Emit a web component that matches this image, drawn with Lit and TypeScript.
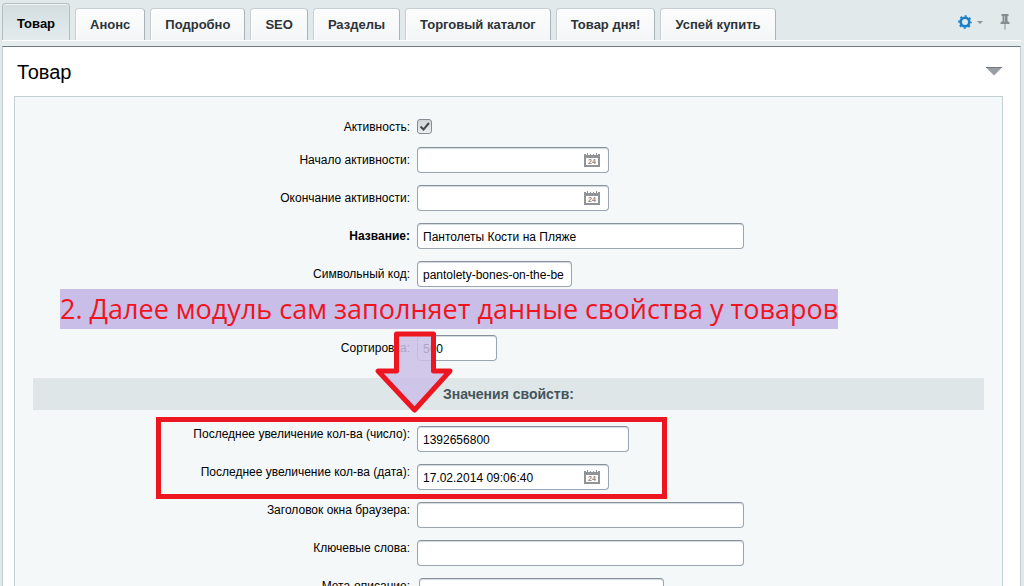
import { LitElement, html, css, svg } from "lit";
import { customElement, property, state } from "lit/decorators.js";
import { classMap } from "lit/directives/class-map.js";

interface Field {
  id: string;
  label: string;
  kind: "check" | "date" | "text" | "area";
  size?: "code" | "sort" | "number" | "full";
  value?: string;
  bold?: boolean;
}

const MAIN_FIELDS: Field[] = [
  { id: "active", label: "Активность:", kind: "check" },
  { id: "from", label: "Начало активности:", kind: "date" },
  { id: "to", label: "Окончание активности:", kind: "date" },
  { id: "name", label: "Название:", kind: "text", size: "full", value: "Пантолеты Кости на Пляже", bold: true },
  { id: "code", label: "Символьный код:", kind: "text", size: "code", value: "pantolety-bones-on-the-be" },
];

const SORT_FIELDS: Field[] = [
  { id: "sort", label: "Сортировка:", kind: "text", size: "sort", value: "500" },
];

const PROPERTY_FIELDS: Field[] = [
  { id: "inc-number", label: "Последнее увеличение кол-ва (число):", kind: "text", size: "number", value: "1392656800" },
  { id: "inc-date", label: "Последнее увеличение кол-ва (дата):", kind: "date", value: "17.02.2014 09:06:40" },
  { id: "title", label: "Заголовок окна браузера:", kind: "text", size: "full" },
  { id: "keywords", label: "Ключевые слова:", kind: "text", size: "full" },
  { id: "description", label: "Мета-описание:", kind: "area" },
];

@customElement("date-field")
class DateField extends LitElement {
  @property() label = "";
  @property() value = "";

  static styles = css`
    :host { display: block; width: 192px; }
    .box {
      display: flex;
      align-items: center;
      box-sizing: border-box;
      height: 26px;
      padding: 0 8px 0 5px;
      border: 1px solid #9aa5b0;
      border-top-color: #87919c;
      border-radius: 4px;
      background: #fff;
      box-shadow: inset 0 1px 1px #d3d9dd;
    }
    input {
      flex: 1;
      min-width: 0;
      padding: 2px 0 0;
      border: 0;
      outline: 0;
      background: none;
      color: #000;
      font: 12px "Liberation Sans", Arial, sans-serif;
    }
    button { display: flex; padding: 0; border: 0; background: none; cursor: pointer; }
    text { font: bold 7px "Liberation Sans", Arial, sans-serif; fill: #85898c; }
  `;

  render() {
    return html`<div class="box">
      <input type="text" aria-label=${this.label} .value=${this.value} />
      <button type="button" aria-label="Календарь">
        <svg width="16" height="16" viewBox="0 0 16 16">
          <path d="M0 2h2v1h1V1h1v2h2V2h1v1h2V2h1v1h2V1h1v2h1V2h2v13H0z" fill="#909496" />
          <path d="M2 6h12v7H2z" fill="#fff" />
          <text x="8" y="12" text-anchor="middle">24</text>
        </svg>
      </button>
    </div>`;
  }
}

@customElement("app-root")
class AppRoot extends LitElement {
  @state() private active = 0;

  private tabs = ["Товар", "Анонс", "Подробно", "SEO", "Разделы", "Торговый каталог", "Товар дня!", "Успей купить"];

  static styles = css`
    :host {
      display: block;
      height: 100vh;
      overflow: hidden;
      background: #e1e9eb;
      color: #000;
      font: 12px/16px "Liberation Sans", Arial, sans-serif;
    }
    .page { margin: 0 3px 0 2px; }
    .bar { display: flex; align-items: flex-end; height: 40px; }
    .tabs { display: flex; align-items: flex-end; gap: 5px; }
    .tab {
      height: 32px;
      box-sizing: border-box;
      padding: 0 14px;
      border: 1px solid #c6d0d3;
      border-right-color: #a9b4b8;
      border-bottom: 0;
      border-radius: 4px 4px 0 0;
      background: linear-gradient(#fcfdfd, #f3f6f7);
      box-shadow: inset 1px 1px #fff;
      color: #2d3339;
      font: bold 13px "Liberation Sans", Arial, sans-serif;
      white-space: nowrap;
      cursor: pointer;
    }
    .tab.on {
      height: 37px;
      padding-top: 2px;
      border-color: #b3bfc3;
      background: linear-gradient(#d3dddf, #e3ebed);
      box-shadow: inset 0 1px #eef3f4;
      color: #000;
    }
    .tools { display: flex; align-items: center; gap: 5px; height: 22px; margin: 0 11px 7px auto; }
    .tools button, .fold { display: flex; padding: 0; border: 0; background: none; cursor: pointer; }
    .tools .pin { margin-left: 12px; }
    .strip { height: 6px; box-sizing: border-box; border-top: 1px solid #fff; background: #e6edef; }
    .panel {
      position: relative;
      padding: 0 17px 0 11px;
      border: 1px solid #c3ced2;
      border-top: 1px solid #6f7a80;
      background: #fff;
    }
    .head { display: flex; align-items: center; justify-content: space-between; height: 49px; padding: 0 1px 0 3px; }
    h1 { margin: 0; font-size: 20px; line-height: 24px; font-weight: 400; }
    .form {
      padding: 20px 18px;
      border: 1px solid #c3d0d4;
      background: #f4f8f9;
    }
    .rows { display: flex; flex-direction: column; gap: 12px; }
    .row { display: grid; grid-template-columns: 377px 1fr; column-gap: 7px; align-items: center; min-height: 26px; }
    .row.short { min-height: 18px; }
    .row.short .label { padding-top: 2px; }
    .props .row { align-items: start; }
    .label { text-align: right; }
    .label.bold { font-weight: 700; }
    .sorting { margin-top: 48px; }
    h2 {
      margin: 17px 0 16px;
      background: #dfe6e7;
      color: #43555c;
      font-size: 14px;
      line-height: 32px;
      text-align: center;
    }
    .text, .area {
      box-sizing: border-box;
      height: 26px;
      max-width: 100%;
      padding: 2px 5px 0;
      border: 1px solid #9aa5b0;
      border-top-color: #87919c;
      border-radius: 4px;
      outline: 0;
      background: #fff;
      box-shadow: inset 0 1px 1px #d3d9dd;
      color: #000;
      font: 12px "Liberation Sans", Arial, sans-serif;
    }
    .full { width: 327px; }
    .code { width: 155px; }
    .sort { width: 80px; }
    .number { width: 212px; }
    .area { display: block; width: 245px; height: 60px; margin-left: 2px; resize: none; }
    .check {
      appearance: none;
      display: block;
      width: 15px;
      height: 15px;
      margin: 0;
      border: 1px solid #868c92;
      border-radius: 3px;
      background: linear-gradient(#d0d4d6, #eceeef);
    }
    .checkwrap { display: grid; width: 15px; }
    .checkwrap > * { grid-area: 1 / 1; }
    .checkwrap svg { pointer-events: none; }
    .check:not(:checked) + svg { visibility: hidden; }
    .note {
      position: absolute;
      top: 242px;
      left: 57px;
      background: #c9bee8;
      color: #f0141e;
      font: 27px/40px "Open Sans", "Noto Sans", sans-serif;
      white-space: nowrap;
    }
    .arrow { position: absolute; top: 282px; left: 370px; }
    .frame {
      position: absolute;
      top: 370px;
      left: 153px;
      width: 501px;
      height: 72px;
      border: 5px solid #ed1620;
      pointer-events: none;
    }
  `;

  private control(f: Field) {
    if (f.kind === "check") {
      return html`<span class="checkwrap">
        <input class="check" id=${f.id} type="checkbox" checked />
        <svg width="15" height="15" viewBox="0 0 15 15">
          <path d="M3.5 7.5l3 3L12 4" fill="none" stroke="#43494e" stroke-width="2" />
        </svg>
      </span>`;
    }
    if (f.kind === "date") {
      return html`<date-field id=${f.id} .label=${f.label} .value=${f.value ?? ""}></date-field>`;
    }
    if (f.kind === "area") return html`<textarea class="area" id=${f.id}></textarea>`;
    return html`<input class="text ${f.size}" id=${f.id} type="text" .value=${f.value ?? ""} />`;
  }

  private rows(fields: Field[]) {
    return fields.map(
      (f) => html`<div class=${classMap({ row: true, short: f.kind === "check" })}>
        <label class=${classMap({ label: true, bold: !!f.bold })} for=${f.id}>${f.label}</label>
        ${this.control(f)}
      </div>`
    );
  }

  private gear() {
    return svg`<g fill="none" stroke="#1c7fc9">
      <circle cx="7" cy="7" r="4.3" stroke-width="2.6" />
      <circle cx="7" cy="7" r="6" stroke-width="1.6" stroke-dasharray="2.2 2.51" stroke-dashoffset="1.1" />
    </g>`;
  }

  render() {
    return html`<div class="page">
      <div class="bar">
        <div class="tabs" role="tablist">
          ${this.tabs.map(
            (t, i) => html`<button
              type="button"
              role="tab"
              aria-selected=${i === this.active}
              class=${classMap({ tab: true, on: i === this.active })}
              @click=${() => (this.active = i)}
            >${t}</button>`
          )}
        </div>
        <div class="tools">
          <button type="button" aria-label="Настройки">
            <svg width="14" height="14" viewBox="0 0 14 14">${this.gear()}</svg>
          </button>
          <svg width="6" height="3" viewBox="0 0 6 3"><path d="M0 0h6L3 3z" fill="#8b9499" /></svg>
          <button type="button" class="pin" aria-label="Закрепить">
            <svg width="10" height="16" viewBox="0 0 10 16">
              <path d="M1.5 0h7v2h-1v5l2 1.500v1.500h-4v5.500h-1V10h-4V8.500l2-1.500V2h-1z" fill="#858d91" />
              <path d="M4 2h1v6H4z" fill="#b9c0c3" />
            </svg>
          </button>
        </div>
      </div>
      <div class="strip"></div>
      <main class="panel">
        <div class="head">
          <h1>Товар</h1>
          <button type="button" class="fold" aria-label="Свернуть">
            <svg width="16" height="9" viewBox="0 0 16 9">
              <path d="M0 .5h16L8 8.500z" fill="#989ea4" />
              <path d="M0 .5h16" stroke="#71787f" />
            </svg>
          </button>
        </div>
        <form class="form">
          <div class="rows">${this.rows(MAIN_FIELDS)}</div>
          <div class="rows sorting">${this.rows(SORT_FIELDS)}</div>
          <h2>Значения свойств:</h2>
          <div class="rows props">${this.rows(PROPERTY_FIELDS)}</div>
        </form>
        <div class="note">2. Далее модуль сам заполняет данные свойства у товаров</div>
        <svg class="arrow" width="84" height="86" viewBox="0 0 84 86">
          <path
            d="M23.500 5h37v37H77L41.500 81 5 42h18.500z"
            fill="#cbbfe8"
            fill-opacity=".85"
            stroke="#ed1620"
            stroke-width="5"
            stroke-linejoin="round"
          />
        </svg>
        <div class="frame"></div>
      </main>
    </div>`;
  }
}
